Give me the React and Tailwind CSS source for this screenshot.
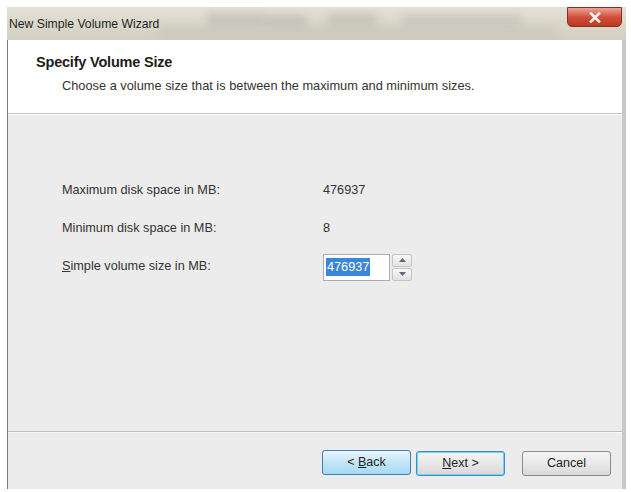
import { useState } from "react";

const font = { fontFamily: '"Liberation Sans", Arial, sans-serif' };

function WizButton({ children, variant = "normal" }) {
  const styles = {
    hover:
      "border-[#3c7fb1] bg-gradient-to-b from-[#eaf6fd] via-[#c4e5f6] to-[#a7d9f5]",
    focus:
      "border-[#3b8fc4] shadow-[inset_0_0_0_1px_#7ad0f2] bg-gradient-to-b from-[#f4f4f4] via-[#e8e8e8] to-[#d8d8d8]",
    normal:
      "border-[#8a8a8a] bg-gradient-to-b from-[#f5f5f5] via-[#e9e9e9] to-[#d9d9d9]",
  };
  return (
    <button
      className={`h-[25px] w-[89px] rounded-[3px] border text-[12.5px] text-[#1e1e1e] ${styles[variant]}`}
    >
      {children}
    </button>
  );
}

function Row({ label, value, children }) {
  return (
    <div className="flex h-[38px] items-center">
      <div className="w-[261px] text-[12.7px] text-[#333]">{label}</div>
      {children ?? <div className="text-[12.7px] text-[#333]">{value}</div>}
    </div>
  );
}

export default function App() {
  const [size] = useState("476937");

  return (
    <div className="h-[492px] w-[631px] bg-white pt-[7px]" style={font}>
      <div className="ml-[7px] w-[619px]">
        {/* title bar */}
        <div className="relative flex h-[33px] items-center overflow-hidden bg-gradient-to-b from-[#e3e1d6] to-[#d2cfc0] pl-[2px] pt-[2px]">
          <div className="absolute left-[200px] top-[6px] h-[14px] w-[60px] bg-[#b9b7ad] opacity-60 blur-[4px]" />
          <div className="absolute left-[260px] top-[8px] h-[12px] w-[40px] bg-[#aeaca3] opacity-50 blur-[4px]" />
          <div className="absolute left-[320px] top-[6px] h-[14px] w-[50px] bg-[#b5b3a9] opacity-50 blur-[4px]" />
          <div className="absolute left-[395px] top-[8px] h-[12px] w-[120px] bg-[#bab8ae] opacity-50 blur-[4px]" />
          <div className="absolute left-[150px] top-[20px] h-[10px] w-[400px] bg-[#c3c1b6] opacity-60 blur-[5px]" />
          <span className="relative text-[12.2px] text-[#1f1f1f]">
            New Simple Volume Wizard
          </span>
          <div className="absolute right-[4px] top-0 flex h-[20px] w-[55px] items-center justify-center rounded-b-[5px] border border-[#8c2a1c] bg-gradient-to-b from-[#e8a495] via-[#d2503a] to-[#b93a24]">
            <svg width="12" height="11" viewBox="0 0 12 11">
              <path
                d="M2 1.5 L10 9.5 M10 1.5 L2 9.5"
                stroke="#f6f2f0"
                strokeWidth="2.6"
                strokeLinecap="square"
              />
            </svg>
          </div>
        </div>

        {/* client area */}
        <div className="border-l border-l-[#7a7a7a] border-r-[4px] border-r-[#c9c9c9]">
          <div className="h-[73px] bg-white pl-[28px] pt-[12px]">
            <div className="text-[14.5px] font-bold tracking-[-0.2px] text-[#1c1c1c]">
              Specify Volume Size
            </div>
            <div className="mt-[2px] pl-[26px] text-[12.8px] text-[#333]">
              Choose a volume size that is between the maximum and minimum sizes.
            </div>
          </div>
          <div className="h-px bg-[#c6c6c6]" />
          <div className="h-px bg-white" />

          <div className="h-[316px] bg-[#ececec] pl-[54px] pt-[57px]">
            <Row label="Maximum disk space in MB:" value="476937" />
            <Row label="Minimum disk space in MB:" value="8" />
            <Row
              label={
                <span>
                  <span className="underline">S</span>imple volume size in MB:
                </span>
              }
            >
              <div className="flex items-center">
                <div className="flex h-[27px] w-[67px] items-center border border-[#abadb3] bg-white px-[2px]">
                  <span className="bg-[#3a86d8] px-px text-[12.7px] leading-[18px] text-white">
                    {size}
                  </span>
                </div>
                <div className="ml-[2px] flex h-[27px] w-[20px] flex-col gap-px">
                  <div className="flex flex-1 items-center justify-center rounded-[2px] border border-[#c4c4c4] bg-gradient-to-b from-[#f7f7f7] to-[#e2e2e2]">
                    <svg width="7" height="4" viewBox="0 0 7 4">
                      <path d="M0 4 L3.5 0 L7 4 Z" fill="#5a6a80" />
                    </svg>
                  </div>
                  <div className="flex flex-1 items-center justify-center rounded-[2px] border border-[#c4c4c4] bg-gradient-to-b from-[#f7f7f7] to-[#e2e2e2]">
                    <svg width="7" height="4" viewBox="0 0 7 4">
                      <path d="M0 0 L3.5 4 L7 0 Z" fill="#5a6a80" />
                    </svg>
                  </div>
                </div>
              </div>
            </Row>
          </div>

          <div className="h-px bg-[#bdbdbd]" />
          <div className="h-px bg-[#f8f8f8]" />

          <div className="flex h-[56px] items-start bg-[#ececec] pl-[314px] pt-[17px]">
            <WizButton variant="hover">
              &lt; <span className="underline">B</span>ack
            </WizButton>
            <div className="ml-[5px]">
              <WizButton variant="focus">
                <span className="underline">N</span>ext &gt;
              </WizButton>
            </div>
            <div className="ml-[17px]">
              <WizButton>Cancel</WizButton>
            </div>
          </div>
        </div>
      </div>
    </div>
  );
}
